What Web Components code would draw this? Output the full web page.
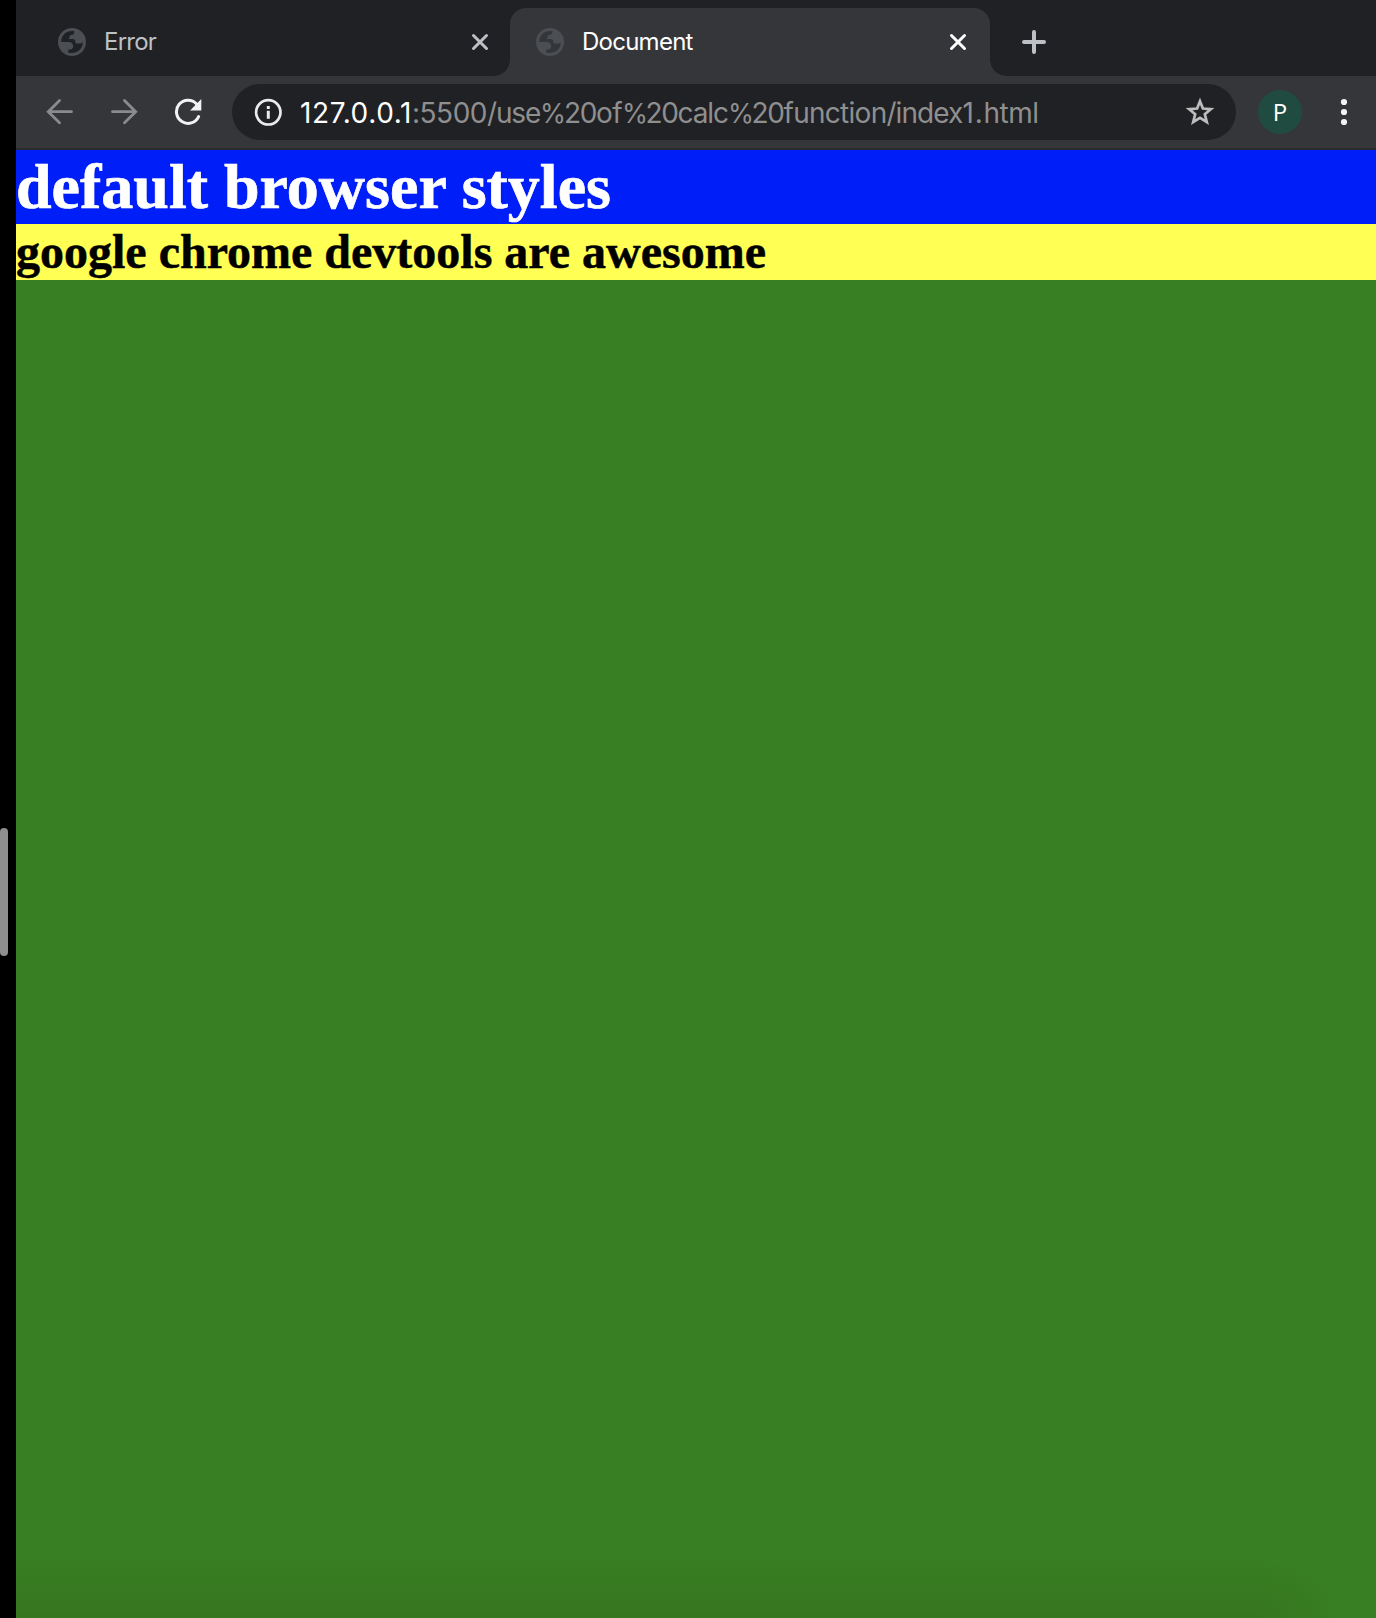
<!DOCTYPE html>
<html lang="en"><head><meta charset="utf-8"><title>Document</title>
<style>html,body{margin:0;height:100%;background:#000;overflow:hidden}</style></head>
<body>
<browser-window>
  <tab-strip slot="chrome">
    <browser-tab>Error</browser-tab>
    <browser-tab active>Document</browser-tab>
  </tab-strip>
  <tool-bar slot="chrome"></tool-bar>
  <web-view><span slot="h1">default browser styles</span><span slot="h2">google chrome devtools are awesome</span></web-view>
</browser-window>
<script>
const define=(name,html)=>customElements.define(name,class extends HTMLElement{
  constructor(){super();this.attachShadow({mode:'open'}).innerHTML=html;}
  connectedCallback(){
    // Track each run of the address so that it fills its data-w width.
    this.shadowRoot.querySelectorAll('[data-w]').forEach(s=>{
      s.style.letterSpacing='0px';
      const natural=s.getBoundingClientRect().width;
      s.style.letterSpacing=(s.dataset.w-natural)/s.textContent.length+'px';
    });
  }
});
define('browser-window',`<style>
:host{display:flex;height:1618px;width:1376px}
.edge{width:16px;flex:none;background:#000;display:flex;align-items:center}
.grip{width:8px;height:128px;border-radius:4px;background:#8f8f8f;margin-top:166px}
.main{flex:1;min-width:0;display:flex;flex-direction:column}
</style><div class="edge"><div class="grip"></div></div><div class="main"><slot name="chrome"></slot><slot></slot></div>`);
define('tab-strip',`<style>
:host{display:flex;height:76px;flex:none;background:#202124;align-items:stretch;box-sizing:border-box;padding:8px 0 0 14px}
.new{align-self:center;margin:0 0 0 32px;display:block}
</style><slot></slot><svg class="new" width="24" height="24" viewBox="0 0 24 24"><path d="M12 2v20M2 12h20" stroke="#bdc1c6" stroke-width="4" stroke-linecap="round"/></svg>`);
define('browser-tab',`<style>
:host{display:flex;width:480px;height:68px;box-sizing:border-box;padding:0 21px 0 28px;align-items:center;color:#bdc1c6;font:24px/28px Inter,sans-serif;letter-spacing:-.75px}
:host([active]){background:#35363a;color:#fff;border-radius:16px 16px 0 0;padding:0 23px 0 26px;--flare:block}
.foot{display:var(--flare,none);position:absolute;width:16px;height:16px;top:60px}
.l{left:494px;background:radial-gradient(circle at 0 0,transparent 15.5px,#35363a 16px)}
.r{left:990px;background:radial-gradient(circle at 100% 0,transparent 15.5px,#35363a 16px)}
.t{flex:1;margin-left:18px}
svg{flex:none;display:block}
</style><div class="foot l"></div><svg width="28" height="28" viewBox="0 0 28 28"><path fill="#4b4e52" fill-rule="evenodd" d="M14 0a14 14 0 1 0 0 28 14 14 0 0 0 0-28ZM3.2 14C3.1 7.5 8 3 14 3h2.2v1.3c0 1.5-1.2 2.7-2.8 2.7-1.5 0-1.9.9-1.9 2.3 0 1.2-1 1.8-2.2 1.8h5.2c2.1 0 2.8 1.2 2.8 2.8 0 1 .8 1.6 1.8 1.6h3.2c1 0 1.8-.5 2.5-1.4C25 20.5 20 25 14 25c-1.3 0-2.5-.1-3.700-.5v-3.1h2c1.8 0 2.8-1.1 2.8-2.600v-.8c0-2.5-1.700-4-4.300-4Z"/></svg>
<div class="t"><slot></slot></div><svg width="18" height="18" viewBox="0 0 18 18"><path d="M2.5 2.5l13 13m0-13l-13 13" stroke="currentColor" stroke-width="3" stroke-linecap="round"/></svg><div class="foot r"></div>`);
define('tool-bar',`<style>
:host{display:flex;height:74px;flex:none;box-sizing:border-box;background:#35363a;border-bottom:2px solid #292a2d;align-items:center;font-family:Inter,sans-serif;padding-left:30px}
svg{display:block;flex:none}
.fwd{margin-left:36px}.re{margin-left:36px}
.omni{margin-left:29px;width:1004px;height:56px;border-radius:28px;background:#202124;display:flex;align-items:center;box-sizing:border-box;padding:0 21px 0 22px}
.url{flex:1;margin-left:18px;padding-top:1px;font-size:28px;line-height:34px;color:#8f8f90;white-space:nowrap}
.url b{font-weight:400;color:#fff}
.url i{font-style:normal;font-size:26.5px}
.av{margin-left:22px;width:44px;height:44px;border-radius:50%;background:#1f4b41;color:#fff;font:24px/44px "Open Sans",sans-serif;text-align:center}
.menu{margin-left:38px}
</style>
<svg width="28" height="28" viewBox="0 0 28 28"><path d="M25.5 13.7H3M13.5 2.5L2.3 13.7l11.2 11" fill="none" stroke="#8a8b8d" stroke-width="2.8" stroke-linecap="round"/></svg>
<svg class="fwd" width="28" height="28" viewBox="0 0 28 28"><path d="M2.5 13.7H25M14.5 2.5l11.2 11.2-11.2 11" fill="none" stroke="#8a8b8d" stroke-width="2.8" stroke-linecap="round"/></svg>
<svg class="re" width="29" height="28" viewBox="0 0 29 28"><path d="M22.6 5.9A11.6 11.6 0 1 0 24.6 18.6" fill="none" stroke="#f1f3f4" stroke-width="3" stroke-linecap="round"/><path d="M27.300 1v11.5H16.1Z" fill="#f1f3f4"/></svg>
<div class="omni"><svg width="28" height="28" viewBox="0 0 28 28"><circle cx="14.3" cy="14.3" r="12.2" fill="none" stroke="#e8eaed" stroke-width="2.7"/><path d="M12.8 8h3v3h-3zM12.8 12.7h3v8h-3z" fill="#e8eaed"/></svg>
<div class="url"><b data-w="112">127.0.0.1</b><span data-w="75">:5500</span><span data-w="9">/</span><span data-w="44">use</span><i data-w="24">%</i><span data-w="32">20</span><span data-w="26">of</span><i data-w="23.5">%</i><span data-w="32">20</span><span data-w="50.5">calc</span><i data-w="23.5">%</i><span data-w="32">20</span><span data-w="103">function</span><span data-w="9">/</span><span data-w="67">index</span><span data-w="21">1.</span><span data-w="55">html</span></div>
<svg width="30" height="30" viewBox="0 0 30 30"><path d="M15 4.2l2.9 7.3 8 .6-6.100 5.100 2 7.800L15 20.800 8.200 25l2-7.800-6.100-5.100 8-.6Z" fill="none" stroke="#bdbdbd" stroke-width="2.7"/></svg></div>
<div class="av">P</div>
<svg class="menu" width="8" height="28" viewBox="0 0 8 28"><g fill="#f1f3f4"><circle cx="4" cy="4" r="3.1"/><circle cx="4" cy="14" r="3.1"/><circle cx="4" cy="24" r="3.1"/></g></svg>`);
define('web-view',`<style>
:host{display:block;flex:1;background:
 linear-gradient(rgba(54,118,31,0),#36761f) 0 100%/1234px 60px no-repeat,
 radial-gradient(ellipse 90px 60px at 0 100%,#36761f,rgba(54,118,31,0)) 1234px 100%/126px 60px no-repeat #387e22;
 font-family:"Liberation Serif",serif}
h1,h2{margin:0;font-weight:700;white-space:nowrap}
h1{background:#001ef8;color:#fff;font-size:64px;line-height:74px;height:74px;-webkit-text-stroke:.7px #fff}
h2{background:#ffff54;color:#000;font-size:48px;line-height:56px;height:56px;-webkit-text-stroke:.5px #000}
</style><h1><slot name="h1"></slot></h1><h2><slot name="h2"></slot></h2>`);
</script>
</body></html>
